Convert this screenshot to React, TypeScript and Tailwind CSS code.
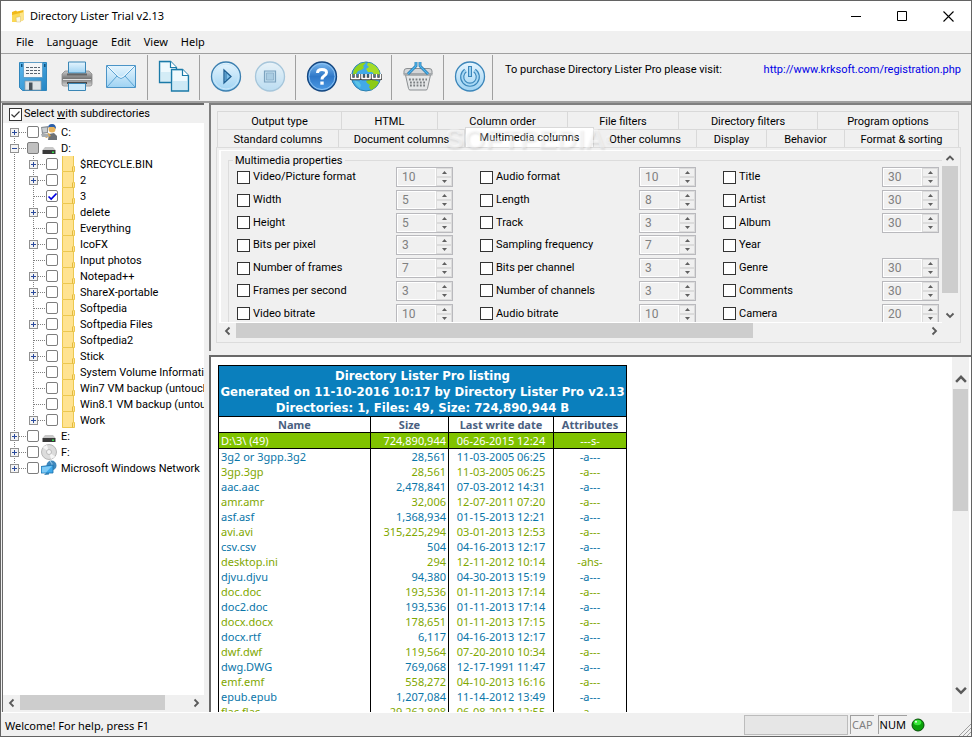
import React, { useState } from 'react';

type Row = [string, string, string, string];

interface TreeItem {
  name: string;
  expandable?: boolean;
  checked?: boolean;
}

const MENU = ['File', 'Language', 'Edit', 'View', 'Help'];

const FOLDERS: TreeItem[] = [
  { name: '$RECYCLE.BIN', expandable: true },
  { name: '2', expandable: true },
  { name: '3', checked: true },
  { name: 'delete', expandable: true },
  { name: 'Everything' },
  { name: 'IcoFX', expandable: true },
  { name: 'Input photos' },
  { name: 'Notepad++', expandable: true },
  { name: 'ShareX-portable', expandable: true },
  { name: 'Softpedia' },
  { name: 'Softpedia Files', expandable: true },
  { name: 'Softpedia2' },
  { name: 'Stick', expandable: true },
  { name: 'System Volume Information' },
  { name: 'Win7 VM backup (untouched)' },
  { name: 'Win8.1 VM backup (untouched)' },
  { name: 'Work', expandable: true },
];

const TABS_BACK = ['Output type', 'HTML', 'Column order', 'File filters', 'Directory filters', 'Program options'];
const TABS_FRONT = ['Standard columns', 'Document columns', 'Multimedia columns', 'Other columns', 'Display', 'Behavior', 'Format & sorting'];

const PROPERTIES: [string, number | null][][] = [
  [['Video/Picture format', 10], ['Width', 5], ['Height', 5], ['Bits per pixel', 3], ['Number of frames', 7], ['Frames per second', 3], ['Video bitrate', 10]],
  [['Audio format', 10], ['Length', 8], ['Track', 3], ['Sampling frequency', 7], ['Bits per channel', 3], ['Number of channels', 3], ['Audio bitrate', 10]],
  [['Title', 30], ['Artist', 30], ['Album', 30], ['Year', null], ['Genre', 30], ['Comments', 30], ['Camera', 20]],
];

const FILES: Row[] = [
  ['3g2 or 3gpp.3g2', '28,561', '11-03-2005 06:25', '-a---'],
  ['3gp.3gp', '28,561', '11-03-2005 06:25', '-a---'],
  ['aac.aac', '2,478,841', '07-03-2012 14:31', '-a---'],
  ['amr.amr', '32,006', '12-07-2011 07:20', '-a---'],
  ['asf.asf', '1,368,934', '01-15-2013 12:21', '-a---'],
  ['avi.avi', '315,225,294', '03-01-2013 12:53', '-a---'],
  ['csv.csv', '504', '04-16-2013 12:17', '-a---'],
  ['desktop.ini', '294', '12-11-2012 10:14', '-ahs-'],
  ['djvu.djvu', '94,380', '04-30-2013 15:19', '-a---'],
  ['doc.doc', '193,536', '01-11-2013 17:14', '-a---'],
  ['doc2.doc', '193,536', '01-11-2013 17:14', '-a---'],
  ['docx.docx', '178,651', '01-11-2013 17:15', '-a---'],
  ['docx.rtf', '6,117', '04-16-2013 12:17', '-a---'],
  ['dwf.dwf', '119,564', '07-20-2010 10:34', '-a---'],
  ['dwg.DWG', '769,068', '12-17-1991 11:47', '-a---'],
  ['emf.emf', '558,272', '04-10-2013 16:16', '-a---'],
  ['epub.epub', '1,207,084', '11-14-2012 13:49', '-a---'],
  ['flac.flac', '29,262,808', '06-08-2012 12:55', '-a---'],
];

/* ---------- icons ---------- */

const AppIcon = () => (
  <svg width="14" height="14" viewBox="0 0 14 14">
    <path d="M1 3L5 1.500L6 2.500L12.500 1V11L9 12.500L1 13Z" fill="#f0b91a" />
    <path d="M1 6L9 4L9 12.500L1 13Z" fill="#fbd956" />
    <path d="M9 4L13 3L12.500 11L9 13Z" fill="#fde58a" />
    <path d="M5 8.500L9.500 7.500V13H5.500Z" fill="#fbf8e6" stroke="#c9b060" strokeWidth=".4" />
  </svg>
);

const ToolbarDefs = () => (
  <svg width="0" height="0" className="absolute" aria-hidden="true">
    <defs>
      <linearGradient id="light" x1="0" y1="0" x2="0" y2="1">
        <stop offset="0" stopColor="#e6f5fe" />
        <stop offset="1" stopColor="#9fd3f3" />
      </linearGradient>
      <linearGradient id="mid" x1="0" y1="0" x2="0" y2="1">
        <stop offset="0" stopColor="#7dbaf0" />
        <stop offset=".5" stopColor="#2f78c8" />
        <stop offset="1" stopColor="#4c9be6" />
      </linearGradient>
      <linearGradient id="floppy" x1="0" y1="0" x2="1" y2="1">
        <stop offset="0" stopColor="#5cb8ee" />
        <stop offset="1" stopColor="#2585c4" />
      </linearGradient>
      <linearGradient id="gray" x1="0" y1="0" x2="0" y2="1">
        <stop offset="0" stopColor="#c9c9c9" />
        <stop offset=".5" stopColor="#777" />
        <stop offset="1" stopColor="#d5d5d5" />
      </linearGradient>
    </defs>
  </svg>
);

const SaveIcon = () => (
  <svg width="32" height="32" viewBox="0 0 32 32">
    <path d="M2.500 2.500H29.500V30.500H5.500L2.500 27.500Z" fill="url(#floppy)" stroke="#2f86bd" />
    <path d="M6.500 2.500H25.500V17.500H6.500Z" fill="#f4f6f8" stroke="#4a8fbd" strokeWidth=".7" />
    <path d="M9 7.500h14M9 10.500h14M9 13.500h14" stroke="#566370" strokeDasharray="3 1" />
    <path d="M4 4h1.500v3H4zM27 4h1.500v3H27z" fill="#0e4f7c" />
    <path d="M8 21H24V30H8Z" fill="#dfe3e6" stroke="#8b9aa5" strokeWidth=".7" />
    <path d="M12 22.500H15.500V30H12Z" fill="#49525a" />
  </svg>
);

const PrintIcon = () => (
  <svg width="32" height="32" viewBox="0 0 32 32">
    <path d="M4 11H28L31 14V24Q31 26 29 26H3Q1 26 1 24V14Z" fill="url(#gray)" stroke="#8a8a8a" strokeWidth=".8" />
    <path d="M7.500 2H24.500V13H7.500Z" fill="url(#light)" stroke="#3a86b5" />
    <path d="M6 13.500h20v2H6z" fill="#666" />
    <path d="M2 19.500h28" stroke="#e2e2e2" />
    <path d="M6 22h20v2H6z" fill="#4b4b4b" />
    <path d="M7.500 23.500H24.500V30.500H7.500Z" fill="#cdeafb" stroke="#3a86b5" />
  </svg>
);

const MailIcon = () => (
  <svg width="32" height="32" viewBox="0 0 32 32">
    <path d="M1.500 5.500H30.500V27.500H1.500Z" fill="url(#light)" stroke="#4b94c7" />
    <path d="M2 6L13 17Q16 20 19 17L30 6M2 27L12 16M30 27L20 16" fill="none" stroke="#5ba3d3" />
    <path d="M3 6L14 16.500Q16 18 18 16.500L29 6" fill="none" stroke="#fff" strokeWidth=".8" />
  </svg>
);

const CopyIcon = () => (
  <svg width="32" height="32" viewBox="0 0 32 32">
    <path d="M1.500 1.500H12.500L18.500 7.500V22.500H1.500Z" fill="#d4ecf6" stroke="#1b7aa8" strokeWidth="1.300" />
    <path d="M3 3H12V8H17V12H3Z" fill="#eff9fd" />
    <path d="M12.500 1.500V7.500H18.500" fill="#fff" stroke="#1b7aa8" strokeWidth="1.200" />
    <path d="M13.500 9.500H24.500L30.500 15.500V31H13.500Z" fill="#cde9f5" stroke="#1b7aa8" strokeWidth="1.300" />
    <path d="M15 11H24V16H29V21H15Z" fill="#eff9fd" />
    <path d="M24.500 9.500V15.500H30.500" fill="#fff" stroke="#1b7aa8" strokeWidth="1.200" />
  </svg>
);

const PlayIcon = () => (
  <svg width="32" height="32" viewBox="0 0 32 32">
    <circle cx="16" cy="16.500" r="14.500" fill="url(#light)" stroke="#3b7fb0" strokeWidth="1.300" />
    <circle cx="16" cy="16.500" r="12.500" fill="none" stroke="#c9e8fb" />
    <path d="M14 10L21 16.500L14 23Z" fill="#7fc0ea" stroke="#1f5f92" strokeWidth="1.300" />
    <path d="M16 12.500V20.500" stroke="#1f5f92" strokeWidth=".8" />
  </svg>
);

const StopIcon = () => (
  <svg width="32" height="32" viewBox="0 0 32 32" opacity=".65">
    <circle cx="16" cy="16.500" r="14.500" fill="url(#light)" stroke="#7fb0d0" strokeWidth="1.300" />
    <path d="M10.500 11H21.500V22H10.500Z" fill="#a9d4ee" stroke="#3f7ba6" strokeWidth="1.200" />
    <path d="M12.500 13H19.500V20H12.500Z" fill="#86bbdd" stroke="#3f7ba6" strokeWidth=".6" />
  </svg>
);

const HelpIcon = () => (
  <svg width="32" height="32" viewBox="0 0 32 32">
    <circle cx="16" cy="16.500" r="14.500" fill="url(#mid)" stroke="#14467f" strokeWidth="1.300" />
    <circle cx="16" cy="16.500" r="13" fill="none" stroke="#8cc2f2" />
    <path d="M11.500 13Q11.500 9.500 16 9.500Q20.500 9.500 20.500 12.500Q20.500 14.500 18 16Q16 17.200 16 19.500" fill="none" stroke="#fff" strokeWidth="3" />
    <path d="M14.300 21.500h3.400v3.200h-3.400z" fill="#fff" />
  </svg>
);

const WWW = 'M1.500 14V18.500H9.500V14M5.500 14V18.500M12 14V18.500H20V14M16 14V18.500M22.500 14V18.500H30.500V14M26.500 14V18.500';

const WebIcon = () => (
  <svg width="32" height="32" viewBox="0 0 32 32">
    <circle cx="16" cy="16.500" r="14.500" fill="#42a9e8" stroke="#2a7fae" />
    <path d="M7 6Q10 2.500 16 2.500L13 6L14 8L11 10L8 11L6 14L3 15Q3 9 7 6Z" fill="#93d31c" />
    <path d="M18 2.500Q27 4.500 29.500 12L30 15L25 15L22 12L18 12L16 9L19 7L17 5Z" fill="#a4dd27" />
    <path d="M16 21L21 19L27 21L29 22Q26 28 21 30L19 27L20 25L17 23Z" fill="#8ccb17" />
    <path d="M4 20L9 22L11 25L10 28Q6 26 4 20Z" fill="#5cc4e4" />
    <path d={WWW} fill="none" stroke="#3c3c3c" strokeWidth="3.400" strokeLinejoin="round" />
    <path d={WWW} fill="none" stroke="#fff" strokeWidth="1.600" strokeLinejoin="round" />
  </svg>
);

const BasketIcon = () => (
  <svg width="32" height="32" viewBox="0 0 32 32">
    <path d="M2 11Q2 8.500 5 8.500H27Q30 8.500 30 11V14H2Z" fill="#d4d6d8" stroke="#8c9093" />
    <path d="M3.500 15H28.500L25.500 28.500Q25.200 30 24 30H8Q6.800 30 6.500 28.500Z" fill="#e4e6e7" stroke="#8b8f92" />
    <path d="M7 19.500H25M8 22.500H24.500M8 25.500H24" stroke="#7a7f82" strokeWidth="1.800" strokeDasharray="1.800 1.500" />
    <path d="M1.500 15.500L1.500 13H30.500V15.500Z" fill="#a4a8ab" />
    <path d="M6 14L14 6V2M26 14L18 6V2" fill="none" stroke="#1c6fa3" strokeWidth="2.800" />
    <path d="M6 14L14 6V2M26 14L18 6V2" fill="none" stroke="#4fb4ec" strokeWidth="1.500" />
  </svg>
);

const PowerIcon = () => (
  <svg width="32" height="32" viewBox="0 0 32 32">
    <circle cx="16" cy="16.500" r="14.500" fill="url(#light)" stroke="#3c86ba" strokeWidth="1.300" />
    <path d="M11.500 10.500A7.800 7.800 0 1 0 20.500 10.500" fill="none" stroke="#3a86ba" strokeWidth="4.200" />
    <path d="M11.500 10.500A7.800 7.800 0 1 0 20.500 10.500" fill="none" stroke="#a7d8f5" strokeWidth="2" />
    <path d="M16 6V17" stroke="#3a86ba" strokeWidth="4" />
    <path d="M16 7V16" stroke="#a7d8f5" strokeWidth="1.800" />
  </svg>
);

const TOOLBAR: { label: string; icon: React.FC }[][] = [
  [{ label: 'Save', icon: SaveIcon }, { label: 'Print', icon: PrintIcon }, { label: 'Send by e-mail', icon: MailIcon }],
  [{ label: 'Copy', icon: CopyIcon }],
  [{ label: 'Generate', icon: PlayIcon }, { label: 'Stop', icon: StopIcon }],
  [{ label: 'Help', icon: HelpIcon }, { label: 'Web site', icon: WebIcon }],
  [{ label: 'Order', icon: BasketIcon }],
  [{ label: 'Exit', icon: PowerIcon }],
];

const FolderIcon = () => (
  <svg width="16" height="16" viewBox="0 0 16 16" className="shrink-0">
    <path d="M2 0H13V10H14.500V16H2Z" fill="#ffe391" />
    <path d="M2.500 0V15.500H14.500V10.500H13.500V0" fill="none" stroke="#ecc850" />
    <path d="M12.500 10.500V15.500" stroke="#e3b93c" />
  </svg>
);

const UserDriveIcon = () => (
  <svg width="16" height="16" viewBox="0 0 16 16" className="shrink-0">
    <path d="M0 3L7 2V9L1 10Z" fill="#8a8f94" />
    <path d="M1 4L6 3.500V8L2 8.500Z" fill="#c9ced2" />
    <circle cx="11" cy="5" r="3.500" fill="#e8b45c" />
    <path d="M7 4Q7 0 11 0Q15 0 15 5L13 3H8Z" fill="#2d5fa8" />
    <path d="M7 16L8 10L13 9L16 12V16Z" fill="#6d7278" />
    <path d="M3 11L8 9L10 12L5 14Z" fill="#d9a64e" />
    <path d="M0 10L7 10L8 13L1 13Z" fill="#a9adb0" />
  </svg>
);

const DriveIcon = () => (
  <svg width="16" height="16" viewBox="0 0 16 16" className="shrink-0">
    <path d="M4 7H12L14.500 10H1.500Z" fill="#c8c8c8" />
    <path d="M1.500 10H14.500V14H1.500Z" fill="#3a3a3a" />
    <path d="M11 11.500H13V13H11Z" fill="#35e04a" />
  </svg>
);

const DiscIcon = () => (
  <svg width="16" height="16" viewBox="0 0 16 16" className="shrink-0">
    <circle cx="8" cy="8" r="7.500" fill="#dcdcdc" stroke="#a8a8a8" strokeWidth=".8" />
    <path d="M8 8L2 3.500A7.500 7.500 0 0 1 6 1ZM8 8L14 12.500A7.500 7.500 0 0 1 10 15Z" fill="#f6f6f6" />
    <circle cx="8" cy="8" r="2.500" fill="#f4f4f4" stroke="#b0b0b0" strokeWidth=".8" />
  </svg>
);

const NetworkIcon = () => (
  <svg width="16" height="16" viewBox="0 0 16 16" className="shrink-0">
    <circle cx="10.500" cy="5.500" r="5" fill="#3f88bd" />
    <path d="M9 1Q12 3 11 8" stroke="#a8d6f2" fill="none" />
    <path d="M0 6.500L12 5V13L0 13Z" fill="#3fa9ea" stroke="#1d6ea8" strokeWidth=".8" />
    <path d="M1 7.300L11 6L5 12.500H1Z" fill="#7fcaf6" />
    <path d="M3 15L8 14.500V13H5Z" fill="#2f7fb4" />
  </svg>
);

const Chevron = ({ dir, big }: { dir: 'up' | 'down' | 'left' | 'right'; big?: boolean }) => {
  const paths = {
    up: 'M1.500 7L5 3.500L8.500 7',
    down: 'M1.500 3.500L5 7L8.500 3.500',
    left: 'M6.500 1.500L3 5L6.500 8.500',
    right: 'M3.500 1.500L7 5L3.500 8.500',
  };
  return (
    <svg width={big ? 14 : 10} height={big ? 14 : 10} viewBox="0 0 10 10">
      <path d={paths[dir]} fill="none" stroke="#5a5a5a" strokeWidth="1.800" />
    </svg>
  );
};

/* ---------- small controls ---------- */

interface TickProps {
  id: string;
  checked?: boolean;
  partial?: boolean;
  variant: 'form' | 'tree';
}

const Tick = ({ id, checked, partial, variant }: TickProps) => {
  const [on, setOn] = useState(!!checked);
  const box =
    variant === 'form'
      ? 'size-[13px] border-[#333] bg-white'
      : `size-3 rounded-[2px] border-[#7d7d7d] ${partial ? 'bg-[#c0c0c0]' : 'bg-white'}`;
  return (
    <span className="grid shrink-0 place-items-center">
      <input
        id={id}
        type="checkbox"
        checked={on}
        onChange={(e) => setOn(e.target.checked)}
        className={`col-start-1 row-start-1 appearance-none border ${box}`}
      />
      {on && (
        <svg width="11" height="11" viewBox="0 0 11 11" className="pointer-events-none col-start-1 row-start-1">
          <path d="M1.500 5.500L4.200 8L9.500 2.500" fill="none" stroke={variant === 'form' ? '#333' : '#0000e0'} strokeWidth={variant === 'form' ? 1.2 : 1.7} />
        </svg>
      )}
    </span>
  );
};

const Spinner = ({ label, value }: { label: string; value: number }) => (
  <div className="flex h-5 w-[57px] border border-[#b9b9bd] bg-[#f0f0f0]">
    <input
      aria-label={`${label} width`}
      defaultValue={value}
      disabled
      className="w-0 flex-1 border border-white pl-1 text-[12px] text-[#808080]"
    />
    <div className="flex w-4 flex-col">
      <button aria-label="Increase" disabled className="grid flex-1 place-items-center border border-[#dcdcdc]">
        <svg width="5" height="3" viewBox="0 0 5 3"><path d="M0 3L2.500 0L5 3Z" fill="#606060" /></svg>
      </button>
      <button aria-label="Decrease" disabled className="grid flex-1 place-items-center border border-[#dcdcdc]">
        <svg width="5" height="3" viewBox="0 0 5 3"><path d="M0 0L2.500 3L5 0Z" fill="#606060" /></svg>
      </button>
    </div>
  </div>
);

/* ---------- tree ---------- */

const Branch = ({ state, first, last }: { state: 'plus' | 'minus' | 'leaf'; first?: boolean; last?: boolean }) => (
  <svg width="22" height="16" viewBox="0 0 22 16" shapeRendering="crispEdges">
    <path d={`M9.500 ${first ? 8 : 0}V${last ? 8 : 16}`} stroke="#808080" strokeDasharray="1 1" />
    <path d="M10 8.500H21" stroke="#808080" strokeDasharray="1 1" />
    {state !== 'leaf' && (
      <>
        <rect x="5.500" y="4.500" width="8" height="8" fill="#f4f4f4" stroke="#919191" />
        <path d="M7 8.500H12" stroke="#2a4a9c" />
        {state === 'plus' && <path d="M9.500 6V11" stroke="#2a4a9c" />}
      </>
    )}
  </svg>
);

interface NodeProps {
  name: string;
  state: 'plus' | 'minus' | 'leaf';
  icon: React.ReactNode;
  child?: boolean;
  first?: boolean;
  last?: boolean;
  checked?: boolean;
  partial?: boolean;
  onToggle?: () => void;
}

const TreeNode = ({ name, state, icon, child, first, last, checked, partial, onToggle }: NodeProps) => {
  const id = `node-${name}`;
  return (
    <li className="flex h-4 items-center">
      {child && (
        <svg width="19" height="16" viewBox="0 0 19 16" shapeRendering="crispEdges" className="shrink-0">
          <path d="M9.500 0V16" stroke="#808080" strokeDasharray="1 1" />
        </svg>
      )}
      {state === 'leaf' ? (
        <span className="shrink-0"><Branch state={state} last={last} /></span>
      ) : (
        <button aria-label={`Expand ${name}`} onClick={onToggle} className="shrink-0">
          <Branch state={state} first={first} last={last} />
        </button>
      )}
      <Tick id={id} variant="tree" checked={checked} partial={partial} />
      <label htmlFor={id} className="ml-0.5 flex items-center gap-1 whitespace-nowrap">
        {icon}
        <span className="pt-0.5">{name}</span>
      </label>
    </li>
  );
};

const DirectoryTree = () => {
  const [open, setOpen] = useState(true);
  return (
    <div className="flex w-[202px] shrink-0 flex-col border-t-2 border-l border-[#696969] bg-white font-['Roboto',sans-serif]">
      <div className="flex h-[18px] items-center gap-0.5 bg-[#f0f0f0] pl-1.5">
        <Tick id="subdirs" variant="form" checked />
        <label htmlFor="subdirs">
          Select <u>w</u>ith subdirectories
        </label>
      </div>
      <ul className="min-h-0 flex-1 overflow-hidden pt-px pl-0.5">
        <TreeNode name="C:" state="plus" icon={<UserDriveIcon />} first />
        <TreeNode name="D:" state={open ? 'minus' : 'plus'} icon={<DriveIcon />} partial onToggle={() => setOpen(!open)} />
        {open &&
          FOLDERS.map((f, i) => (
            <TreeNode
              key={f.name}
              name={f.name}
              state={f.expandable ? 'plus' : 'leaf'}
              icon={<FolderIcon />}
              checked={f.checked}
              last={i === FOLDERS.length - 1}
              child
            />
          ))}
        <TreeNode name="E:" state="plus" icon={<DriveIcon />} />
        <TreeNode name="F:" state="plus" icon={<DiscIcon />} />
        <TreeNode name="Microsoft Windows Network" state="plus" icon={<NetworkIcon />} last />
      </ul>
      <div className="flex h-[17px] items-start bg-[#f0f0f0]">
        <button aria-label="Scroll left" className="grid h-4 w-[17px] place-items-center"><Chevron dir="left" /></button>
        <div className="flex-1">
          <div className="h-[15px] w-[87%] bg-[#cdcdcd]" />
        </div>
        <button aria-label="Scroll right" className="grid h-4 w-[17px] place-items-center"><Chevron dir="right" /></button>
      </div>
    </div>
  );
};

/* ---------- options ---------- */

const OptionTabs = () => {
  const [active, setActive] = useState('Multimedia columns');
  const tab = (name: string) => {
    const selected = name === active;
    return (
      <button
        key={name}
        role="tab"
        aria-selected={selected}
        onClick={() => setActive(name)}
        className={
          selected
            ? '-mt-0.5 h-5 border-x border-t border-[#d9d9d9] bg-white whitespace-nowrap'
            : 'h-[18px] border-t border-r border-[#d9d9d9] pt-0.5 whitespace-nowrap'
        }
      >
        {name}
      </button>
    );
  };
  return (
    <div role="tablist" className="mr-0.5 ml-px">
      <div className="grid grid-cols-[124fr_96fr_130fr_111fr_139fr_141fr] border-l border-[#d9d9d9]">{TABS_BACK.map(tab)}</div>
      <div className="grid grid-cols-[121fr_126fr_129fr_103fr_70fr_78fr_114fr] border-l border-[#d9d9d9]">{TABS_FRONT.map(tab)}</div>
    </div>
  );
};

const OptionsPane = () => (
  <section className="relative border-t-2 border-l-2 border-[#808080] pt-1.5 pr-2.5 pb-2 pl-[5px] font-['Roboto',sans-serif]">
    <OptionTabs />
    <div className="flex flex-col border border-[#dcdcdc] bg-[#f0f0f0] p-0.5">
      <div className="flex h-[173px]">
        <div className="min-w-0 flex-1 overflow-hidden border-t border-b border-l-2 border-white pt-1 pl-[7px]">
          <fieldset className="h-[190px] border-t border-l border-[#dcdcdc]">
            <legend className="ml-1 h-[11px] px-0.5 leading-3">Multimedia properties</legend>
            <div className="flex h-[159px] gap-[27px] pl-2">
              {PROPERTIES.map((column, c) => (
                <div key={c} className="grid w-[216px] shrink-0 grid-rows-7">
                  {column.map(([label, value]) => (
                    <div key={label} className="flex items-center">
                      <Tick id={`prop-${label}`} variant="form" />
                      <label htmlFor={`prop-${label}`} className="flex-1 pl-[3px]">{label}</label>
                      {value !== null && <Spinner label={label} value={value} />}
                    </div>
                  ))}
                </div>
              ))}
            </div>
          </fieldset>
        </div>
        <div className="flex w-4 flex-col">
          <button aria-label="Scroll up" className="grid h-4 place-items-center"><Chevron dir="up" /></button>
          <div className="flex-1">
            <div className="h-[90%] bg-[#cdcdcd]" />
          </div>
          <button aria-label="Scroll down" className="grid h-4 place-items-center"><Chevron dir="down" /></button>
        </div>
      </div>
      <div className="flex h-[17px] items-start pr-4">
        <button aria-label="Scroll left" className="grid h-4 w-[17px] place-items-center"><Chevron dir="left" /></button>
        <div className="flex-1">
          <div className="h-[15px] w-3/4 bg-[#cdcdcd]" />
        </div>
        <button aria-label="Scroll right" className="grid h-4 w-[17px] place-items-center"><Chevron dir="right" /></button>
      </div>
    </div>
    <span className="pointer-events-none absolute top-[18px] left-[234px] font-['Liberation_Sans',sans-serif] text-[28px] leading-8 font-bold text-white/40 [text-shadow:1px_2px_2px_rgb(0_0_0/0.08)]">
      SOFTPEDIA<sup className="text-[10px]">®</sup>
    </span>
  </section>
);

/* ---------- listing ---------- */

const ListingPane = () => (
  <section className="flex min-h-0 flex-1 border-t-2 border-l-2 border-[#696969] bg-white">
    <div className="min-w-0 flex-1 overflow-hidden pt-2 pl-[7px]">
      <table className="w-[409px] table-fixed border-collapse border border-black text-[11px]">
        <colgroup>
          <col className="w-[152px]" />
          <col className="w-[78px]" />
          <col className="w-[105px]" />
          <col className="w-[73px]" />
        </colgroup>
        <thead>
          <tr>
            <th colSpan={4} className="h-[51px] bg-[#0a7fbd] pt-0.5 font-['DejaVu_Sans_Condensed','Noto_Sans',sans-serif] text-[13px] leading-4 font-bold whitespace-nowrap text-white">
              Directory Lister Pro listing
              <br />
              Generated on 11-10-2016 10:17 by Directory Lister Pro v2.13
              <br />
              Directories: 1, Files: 49, Size: 724,890,944 B
            </th>
          </tr>
          <tr className="text-[#4a6080] [&>th]:h-4 [&>th]:border [&>th]:border-black [&>th]:leading-[15px] [&>th]:font-bold">
            <th>Name</th>
            <th>Size</th>
            <th>Last write date</th>
            <th>Attributes</th>
          </tr>
          <tr className="bg-[#80c300] text-white [&>td]:h-4 [&>td]:border [&>td]:border-black [&>td]:px-0.5 [&>td]:leading-[15px]">
            <td>D:\3\ (49)</td>
            <td className="text-right">724,890,944</td>
            <td className="text-center">06-26-2015 12:24</td>
            <td className="text-center">---s-</td>
          </tr>
        </thead>
        <tbody>
          {FILES.map(([name, size, date, attrs]) => (
            <tr
              key={name}
              className="text-[#0a76a8] even:text-[#7fa700] [&>td]:h-[15px] [&>td]:border-x [&>td]:border-black [&>td]:px-0.5 [&>td]:leading-[15px]"
            >
              <td>{name}</td>
              <td className="text-right">{size}</td>
              <td className="text-center">{date}</td>
              <td className="text-center">{attrs}</td>
            </tr>
          ))}
        </tbody>
      </table>
    </div>
    <div className="mr-0.5 flex w-[17px] flex-col bg-[#f0f0f0] pt-3 pb-3">
      <button aria-label="Scroll up" className="grid h-5 place-items-center"><Chevron dir="up" big /></button>
      <div className="flex-1 px-px">
        <div className="h-[42%] bg-[#cdcdcd]" />
      </div>
      <button aria-label="Scroll down" className="grid h-5 place-items-center"><Chevron dir="down" big /></button>
    </div>
  </section>
);

/* ---------- window ---------- */

export default function App() {
  return (
    <div className="flex h-screen flex-col overflow-hidden border border-[#636363] bg-[#f0f0f0] font-['Noto_Sans',sans-serif] text-[11px] leading-4 text-black">
      <ToolbarDefs />
      <header className="flex h-[30px] shrink-0 items-center bg-white pl-2.5">
        <AppIcon />
        <h1 className="flex-1 pl-[5px]">Directory Lister Trial v2.13</h1>
        <button aria-label="Minimize" className="grid h-full w-[46px] place-items-center">
          <svg width="10" height="10" viewBox="0 0 10 10"><path d="M0 5.500H10" stroke="#000" /></svg>
        </button>
        <button aria-label="Maximize" className="grid h-full w-[46px] place-items-center">
          <svg width="10" height="10" viewBox="0 0 10 10"><path d="M.5.500H9.500V9.500H.5Z" fill="none" stroke="#000" /></svg>
        </button>
        <button aria-label="Close" className="grid h-full w-[46px] place-items-center">
          <svg width="11" height="11" viewBox="0 0 11 11"><path d="M.5.500L10.500 10.500M10.500.500L.5 10.500" stroke="#000" strokeWidth="1.100" /></svg>
        </button>
      </header>

      <nav className="flex h-[22px] shrink-0 items-center gap-[13px] pl-[15px]">
        {MENU.map((m) => (
          <button key={m}>{m}</button>
        ))}
      </nav>

      <div className="flex h-12 shrink-0 border-t border-[#a0a0a0]">
        <div className="flex pl-1.5">
          {TOOLBAR.map((group, i) => (
            <div key={i} className="my-px flex border-r border-[#a0a0a0] px-1 first:pr-[5px] last:pr-px">
              {group.map(({ label, icon: Icon }) => (
                <button key={label} aria-label={label} className="grid w-11 place-items-center pb-1 last:w-[43px]">
                  <Icon />
                </button>
              ))}
            </div>
          ))}
        </div>
        <div className="flex flex-1 justify-between pt-2 pr-2.5 pl-3 font-['Roboto',sans-serif]">
          <span>To purchase Directory Lister Pro please visit:</span>
          <a href="http://www.krksoft.com/registration.php" className="text-[#0000e6]">http://www.krksoft.com/registration.php</a>
        </div>
      </div>

      <div className="h-0.5 shrink-0 bg-[#a0a0a0]" />

      <main className="flex min-h-0 flex-1 gap-[5px] border-b border-white pl-px">
        <DirectoryTree />
        <div className="flex min-w-0 flex-1 flex-col gap-1">
          <OptionsPane />
          <ListingPane />
        </div>
      </main>

      <footer className="flex h-[23px] shrink-0 items-center pl-1">
        <span className="flex-1 pt-0.5">Welcome! For help, press F1</span>
        <div className="h-5 w-[104px] border border-[#bcbcbc] bg-[#e6e6e6]" />
        <span className="ml-0.5 h-[19px] border-t border-l border-[#a0a0a0] px-px pt-px text-[#808080]">CAP</span>
        <span className="ml-1 h-[19px] border-t border-l border-[#a0a0a0] px-px pt-px">NUM</span>
        <svg width="14" height="14" viewBox="0 0 14 14" className="ml-1">
          <circle cx="7" cy="7" r="6" fill="#0aa00a" stroke="#064d06" />
          <ellipse cx="6.500" cy="4.500" rx="3.800" ry="2.800" fill="#38e838" />
          <circle cx="5" cy="3.800" r="1" fill="#eaffea" />
        </svg>
        <svg width="12" height="12" viewBox="0 0 12 12" className="ml-[34px] self-end">
          <path d="M0 12L12 0M4 12L12 4M8 12L12 8" stroke="#a0a0a0" />
        </svg>
      </footer>
    </div>
  );
}
